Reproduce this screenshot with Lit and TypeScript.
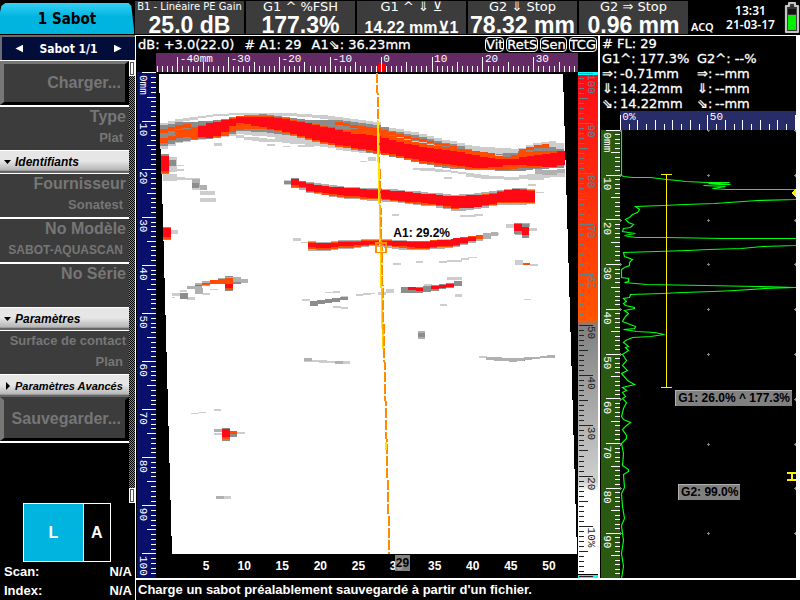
import { LitElement, html, css, svg, nothing } from "lit";
import { customElement, property } from "lit/decorators.js";

type Pt = [number, number, number];
type Box = [number, number, number, number];

const RED = "#ff0a14";
const ORANGE = "#ff4c00";
const DARK = "#8c8c8c";
const MID = "#b0b0b0";
const LIGHT = "#cdcdcd";

/* Echo bands: [x, top, bottom] knots, sampled once per beam. */
const MAIN_ECHO: { fill: string; pts: Pt[] }[] = [
  { fill: LIGHT, pts: [[160, 123, 127], [180, 118, 121], [197, 115, 118], [217, 113, 115], [240, 112, 114], [263, 112, 114], [290, 112, 115], [310, 113, 116], [330, 115, 119], [350, 118, 122], [377, 121, 126]] },
  { fill: LIGHT, pts: [[160, 140, 149], [180, 136, 142], [197, 133, 139], [222, 132, 137], [240, 128, 133], [248, 127, 134], [263, 127, 135], [290, 130, 140], [310, 136, 144], [330, 140, 147], [350, 144, 151], [377, 148, 153]] },
  { fill: LIGHT, pts: [[236, 133, 136], [250, 136, 140], [275, 138, 141], [298, 140, 143], [312, 143, 145]] },
  { fill: DARK, pts: [[160, 125, 146], [180, 121, 141], [197, 121, 139], [222, 118, 136], [240, 115, 130], [263, 113, 131], [290, 117, 134], [310, 119, 139], [330, 119, 144], [350, 120, 148], [377, 124, 153], [400, 130, 157], [420, 134, 162], [437, 138, 166], [457, 142, 168], [480, 147, 169], [507, 150, 170], [520, 149, 170], [537, 145, 168], [565, 147, 167]] },
  { fill: LIGHT, pts: [[385, 125, 128], [400, 128, 131], [420, 132, 135], [437, 137, 140], [457, 141, 144], [475, 145, 150], [500, 147, 153], [520, 148, 151], [535, 142, 146], [557, 140, 146], [565, 145, 150]] },
  { fill: LIGHT, pts: [[400, 136, 138], [430, 143, 145], [457, 148, 150], [475, 151, 153], [500, 154, 156]] },
  { fill: ORANGE, pts: [[160, 129, 133], [175, 125, 129], [190, 123, 127]] },
  { fill: ORANGE, pts: [[160, 138, 143], [178, 133, 137], [198, 128, 134], [205, 126, 133]] },
  { fill: ORANGE, pts: [[175, 130, 133], [198, 126, 136], [222, 124, 132], [245, 123, 128], [267, 122, 127]] },
  { fill: ORANGE, pts: [[337, 121, 124], [350, 123, 126], [377, 127, 131], [400, 133, 136], [430, 140, 142], [457, 146, 148]] },
  { fill: ORANGE, pts: [[350, 127, 130], [377, 130, 135], [400, 137, 140], [430, 144, 147], [470, 149, 155], [495, 153, 157]] },
  { fill: ORANGE, pts: [[192, 126, 138], [222, 120, 136], [240, 115, 128], [267, 115, 128], [290, 118, 133], [330, 126, 144], [377, 134, 152], [430, 146, 163], [457, 149, 167], [480, 154, 168], [507, 156, 169], [520, 152, 167], [537, 150, 167], [565, 150, 165]] },
  { fill: ORANGE, pts: [[520, 149, 153], [537, 144, 147], [547, 143, 147]] },
  { fill: RED, pts: [[198, 127, 136], [207, 122, 137], [222, 120, 134], [230, 118, 126], [240, 116, 122], [267, 116, 127], [290, 119, 132], [310, 122, 137], [330, 127, 142], [350, 132, 146], [377, 135, 150], [400, 141, 155], [430, 147, 161], [457, 150, 165], [480, 155, 167], [498, 158, 166]] },
  { fill: RED, pts: [[495, 158, 164], [512, 158, 164], [537, 154, 165], [552, 152, 166], [565, 149, 163]] },
  { fill: LIGHT, pts: [[412, 167, 169], [430, 167, 170], [457, 170, 172], [475, 173, 176]] },
  { fill: LIGHT, pts: [[467, 171, 176], [490, 175, 178], [512, 176, 179], [540, 172, 177], [565, 169, 176]] },
  { fill: MID, pts: [[535, 168, 173], [550, 169, 175], [565, 167, 171]] },
];

const LATER_ECHOES: { fill: string; pts: Pt[] }[] = [
  { fill: MID, pts: [[299, 179, 186], [307, 181, 192], [322, 183, 194], [350, 186, 198], [377, 187, 200], [400, 189, 202], [437, 192, 206], [457, 194, 210], [475, 192, 209], [503, 189, 203], [513, 187, 204], [535, 188, 203]] },
  { fill: ORANGE, pts: [[299, 180, 184], [307, 181, 190], [322, 185, 193], [350, 187, 197], [377, 188, 198], [437, 194, 205], [457, 195, 208], [487, 193, 205], [503, 190, 202], [513, 188, 202], [535, 189, 202]] },
  { fill: RED, pts: [[299, 181, 183], [307, 182, 189], [322, 185, 192], [350, 187, 195], [377, 189, 197], [400, 190, 200], [437, 194, 203], [457, 195, 207], [475, 194, 207], [487, 194, 204], [503, 190, 201], [513, 188, 201], [535, 190, 201]] },
  { fill: MID, pts: [[309, 240, 250], [325, 241, 250], [345, 239, 248], [377, 238, 245], [400, 239, 249], [422, 240, 249], [450, 238, 247], [473, 235, 242], [495, 231, 235]] },
  { fill: ORANGE, pts: [[309, 241, 248], [325, 242, 249], [345, 240, 247], [377, 239, 244], [400, 240, 247], [422, 240, 248], [457, 237, 245], [480, 234, 238]] },
  { fill: RED, pts: [[309, 242, 246], [325, 242, 247], [345, 241, 245], [377, 240, 243], [400, 240, 245], [422, 241, 247], [457, 237, 244], [474, 236, 239]] },
  { fill: MID, pts: [[187, 286, 289], [203, 281, 286], [218, 278, 282], [232, 275, 280], [247, 279, 282]] },
  { fill: ORANGE, pts: [[194, 285, 286], [205, 282, 284], [218, 278, 282], [232, 277, 283]] },
  { fill: DARK, pts: [[310, 300, 305], [330, 298, 302], [345, 296, 299]] },
  { fill: DARK, pts: [[401, 286, 292], [422, 286, 292], [445, 283, 288], [461, 279, 284]] },
  { fill: RED, pts: [[409, 286, 289], [424, 287, 290]] },
  { fill: RED, pts: [[432, 286, 289], [454, 282, 285]] },
  { fill: MID, pts: [[487, 357, 360], [512, 358, 362], [535, 357, 359], [550, 355, 358]] },
];

/* Isolated reflections: x, y, width, height. */
const SPOTS: { fill: string; boxes: Box[] }[] = [
  { fill: LIGHT, boxes: [
    [284, 179, 8, 5], [163, 173, 14, 7], [169, 156, 8, 15], [177, 164, 7, 1], [177, 168, 7, 2], [177, 176, 8, 3], [184, 177, 8, 2],
    [192, 177, 8, 12], [200, 190, 15, 4], [200, 197, 16, 4], [214, 142, 8, 3], [267, 143, 8, 2], [283, 145, 7, 1], [298, 144, 16, 2], [360, 160, 7, 1], [368, 156, 8, 4],
    [171, 229, 7, 4], [293, 237, 8, 3], [301, 241, 7, 1], [392, 213, 7, 2], [460, 214, 16, 2], [474, 213, 9, 2], [528, 183, 8, 2], [536, 191, 8, 1],
    [506, 223, 8, 4], [529, 227, 8, 3], [490, 232, 9, 2], [515, 259, 8, 5], [530, 263, 8, 2], [393, 262, 8, 2], [416, 260, 7, 2], [439, 260, 8, 2], [447, 259, 15, 2], [461, 257, 8, 2], [468, 256, 9, 1],
    [172, 292, 8, 3], [180, 289, 7, 2], [172, 296, 3, 1], [187, 296, 8, 3], [203, 292, 7, 2], [210, 288, 8, 1], [241, 280, 7, 2], [302, 298, 8, 2], [325, 291, 8, 1], [333, 290, 7, 2], [333, 305, 8, 2], [341, 306, 7, 2],
    [341, 295, 7, 4], [356, 293, 7, 2], [363, 292, 8, 2], [370, 292, 5, 1], [378, 291, 8, 3], [386, 288, 8, 4], [424, 283, 8, 5], [447, 276, 15, 3], [455, 293, 7, 3], [440, 303, 7, 2], [524, 298, 7, 1],
    [304, 358, 8, 4], [312, 360, 7, 2], [319, 360, 8, 3], [327, 361, 8, 2], [343, 361, 7, 3], [479, 356, 8, 2], [547, 355, 8, 2],
    [191, 413, 8, 1], [199, 412, 7, 1], [214, 409, 7, 2], [214, 433, 8, 2], [237, 432, 8, 2], [224, 496, 7, 3], [528, 176, 16, 3], [444, 176, 8, 2],
  ] },
  { fill: MID, boxes: [[192, 178, 8, 8], [200, 184, 7, 5], [195, 287, 8, 6], [214, 429, 8, 3], [216, 496, 8, 3], [304, 358, 8, 3], [335, 361, 8, 3], [418, 331, 7, 8], [515, 232, 8, 2], [522, 222, 8, 4]] },
  { fill: DARK, boxes: [[284, 180, 8, 3], [161, 153, 8, 20], [163, 226, 8, 13], [169, 159, 7, 6], [192, 182, 7, 5], [180, 292, 8, 6], [310, 301, 8, 4], [418, 333, 7, 4], [503, 358, 22, 3], [222, 428, 8, 13], [230, 434, 7, 3], [225, 275, 8, 15], [233, 279, 8, 4], [522, 223, 7, 14], [514, 222, 8, 11], [291, 177, 8, 10]] },
  { fill: ORANGE, boxes: [[161, 155, 8, 17], [163, 227, 8, 11], [222, 429, 8, 10], [230, 431, 7, 3], [225, 276, 8, 13], [233, 279, 7, 2], [523, 262, 7, 2], [218, 277, 8, 6], [291, 178, 8, 8]] },
  { fill: RED, boxes: [[161, 155, 8, 15], [163, 227, 8, 9], [222, 429, 8, 8], [225, 276, 8, 11], [514, 223, 8, 7], [522, 226, 7, 8], [291, 178, 8, 6], [219, 278, 7, 4]] },
];

const BEAM = 7.62;

function sample(pts: Pt[], x: number): [number, number] {
  for (let i = 1; i < pts.length; i++) {
    if (x <= pts[i][0]) {
      const [a, b] = [pts[i - 1], pts[i]];
      const t = Math.max(0, (x - a[0]) / (b[0] - a[0]));
      return [a[1] + (b[1] - a[1]) * t, a[2] + (b[2] - a[2]) * t];
    }
  }
  const last = pts[pts.length - 1];
  return [last[1], last[2]];
}

function bandPath(pts: Pt[]): string {
  const start = pts[0][0];
  const end = pts[pts.length - 1][0];
  const offset = 160 + (pts[0][1] - 125) / 37;
  let d = "";
  for (let k = Math.round((start - offset) / BEAM); ; k++) {
    const x0 = Math.round(offset + k * BEAM);
    if (x0 >= end - 2) break;
    const x1 = Math.round(offset + (k + 1) * BEAM);
    const [top, bottom] = sample(pts, (x0 + x1) / 2);
    const y0 = Math.round(top);
    d += `M${x0} ${y0}H${x1}V${Math.max(y0 + 1, Math.round(bottom))}H${x0}Z`;
  }
  return d;
}

/* A-scan amplitude trace: x grows with amplitude, y with depth. */
const TRACE =
  "1,0 1,45 3,46 12,47 30,47 46,49 57,50 65,51 87,52 109,52 88,53 110,54 83,55 105,56 92,58 106,59 176,59 " +
  "176,69 137,70 94,73 64,74 43,75 15,76 19,79 17,82 12,84 9,87 5,89 8,92 13,94 10,97 3,98 2,101 15,103 4,105 8,106 16,107 46,107 103,108 176,108 " +
  "176,115 142,116 121,118 88,119 67,120 36,121 3,122 4,126 12,129 9,132 9,135 4,137 1,139 1,147 8,148 8,151 4,152 26,154 84,155 137,156 176,157 " +
  "145,158 114,160 93,161 62,162 42,163 10,164 9,167 3,168 6,171 3,173 5,175 14,177 14,178 4,180 8,183 5,186 3,189 2,191 15,196 14,198 3,199 16,201 34,202 44,204 30,206 12,207 5,210 3,212 8,216 " +
  "5,217 8,220 2,224 6,230 2,235 7,240 1,243 7,250 14,254 2,257 6,260 2,262 5,266 2,268 6,272 3,278 1,286 3,289 10,292 6,295 2,299 6,305 6,308 1,313 3,323 2,335 8,339 8,341 3,344 4,357 1,363 2,376 4,388 1,395 3,410 1,423 3,436 1,448";

@customElement("axis-ruler")
export class AxisRuler extends LitElement {
  @property({ type: Number }) min = 0;
  @property({ type: Number }) max = 100;
  @property({ type: Number }) step = 1;
  @property({ type: Number }) mid = 5;
  @property({ type: Number }) major = 10;
  @property() unit = "";
  @property({ type: Number }) unitAt = 0;
  @property() layout: "top" | "side" | "scale" = "top";

  static styles = css`
    :host { display: block; overflow: hidden; }
    svg { display: block; width: 100%; height: 100%; }
    line { stroke: #fff; shape-rendering: crispEdges; }
    text { font: 11px "Liberation Mono", monospace; fill: #fff; }
    .cool line { stroke: #5b8292; }
    .cool text { fill: #5b8292; }
    .warm line { stroke: #222; }
    .warm text { fill: #222; }
  `;

  private mark(v: number) {
    const pos = `${((v - this.min) / (this.max - this.min)) * 100}%`;
    const isMajor = v % this.major === 0;
    const isMid = v % this.mid === 0;
    const label = isMajor && v < this.max - 1 ? `${v}${v === this.unitAt ? this.unit : ""}` : "";
    if (this.layout === "top") {
      const top = isMajor ? 4 : isMid ? 9 : 13;
      return svg`<svg x=${pos} y="0" overflow="visible">
        <line x1="0" x2="0" y1=${top} y2="19"></line>
        ${label ? svg`<text x="2" y="9">${label}</text>` : nothing}</svg>`;
    }
    if (this.layout === "side") {
      const left = isMajor ? 5 : isMid ? 10 : 14;
      return svg`<svg x="0" y=${pos} overflow="visible">
        <line x1=${left} x2="20" y1="0" y2="0"></line>
        ${label ? svg`<text transform="rotate(90)" x="2" y="-3">${label}</text>` : nothing}</svg>`;
    }
    const value = -v;
    const right = isMajor ? 15 : isMid ? 10 : 6;
    const caption = isMajor && value > 0 ? `${value}${value === this.unitAt ? this.unit : ""}` : "";
    return svg`<svg x="0" y=${pos} overflow="visible" class=${value > 50 ? "cool" : "warm"}>
      <line x1="1" x2=${right} y1="0" y2="0"></line>
      ${caption ? svg`<text transform="rotate(90)" x="1" y="-10">${caption}</text>` : nothing}</svg>`;
  }

  render() {
    const marks = [];
    for (let v = Math.ceil(this.min / this.step) * this.step; v <= this.max; v += this.step) marks.push(this.mark(v));
    return html`<svg aria-hidden="true">${marks}</svg>`;
  }
}

@customElement("side-panel")
export class SidePanel extends LitElement {
  static styles = css`
    :host { display: flex; flex-direction: column; background: #000; color: #fff; font: bold 13px/16px "Liberation Sans", Arial, sans-serif; min-height: 0; }
    button { font: inherit; color: inherit; background: none; border: 0; border-radius: 0; padding: 0; margin: 0; }
    .pager { display: flex; align-items: center; justify-content: center; gap: 16px; height: 25px; box-sizing: border-box; background: #020d3a; border-top: 2px solid #6a6a72; border-left: 2px solid #6a6a72; font: bold 12px/16px "DejaVu Sans Condensed", "DejaVu Sans", sans-serif; }
    .arrow { width: 8px; height: 8px; background: #fff; }
    .prev { clip-path: polygon(0 50%, 100% 0, 100% 100%); }
    .next { clip-path: polygon(0 0, 100% 50%, 0 100%); }
    .body { display: grid; grid-template-columns: 1fr 6px; border-top: 1px solid #fff; }
    .track { background: repeating-conic-gradient(#888 0 25%, #000 0 50%) 0 0 / 2px 2px; display: flex; flex-direction: column; justify-content: space-between; height: 442px; }
    .cap { height: 15px; box-sizing: border-box; border: 1px solid #fff; background: #fff; box-shadow: inset 0 0 0 1px #555; }
    .list { display: flex; flex-direction: column; }
    .action { height: 44px; box-sizing: border-box; border: solid; border-width: 3px 4px 3px 4px; border-color: #777 #000 #000 #777; background: #3c3c3c; color: #767676; font-size: 16px; text-align: right; padding-right: 4px; }
    .save { border-top-color: #3c3c3c; }
    .field { display: flex; flex-direction: column; align-items: flex-end; height: 45px; box-sizing: border-box; background: #3c3c3c; color: #767676; border-top: 2px solid #fff; padding: 1px 3px 0 0; white-space: nowrap; }
    .field .name { font-size: 16px; line-height: 18px; }
    .field .val { font-size: 13px; line-height: 24px; padding-right: 3px; }
    .field .code { font-size: 12px; }
    .field.small .name { font-size: 13px; }
    .field.first { border-top-width: 1px; height: 44px; }
    .head { display: flex; align-items: center; gap: 4px; height: 23px; box-sizing: border-box; padding-left: 4px; text-align: left; color: #000; background: linear-gradient(#e6e6e6 0 45%, #b4b4b4 88%, #666 90%); border-top: 1px solid #fff; font-style: italic; font-size: 12px; white-space: nowrap; }
    .head svg { width: 7px; height: 8px; flex: none; }
    .head.long { font-size: 11px; }
    .end { border-top: 2px solid #fff; }
    .probe { display: flex; margin: 0 24px 0 23px; height: 59px; box-sizing: border-box; border: 1px solid #fff; font: bold 16px/20px "Liberation Sans", Arial, sans-serif; }
    .probe button:first-child { flex: 60; background: #00b4e0; border-right: 1px solid #fff; }
    .probe button:last-child { flex: 27; }
    .pos { display: flex; justify-content: space-between; margin: 0; padding: 0 3px 0 4px; line-height: 19px; }
    .pos dt, .pos dd { margin: 0; }
  `;

  private field(name: string, val: string, cls = "", valCls = "") {
    return html`<button class="field ${cls}"><span class="name">${name}</span><span class="val ${valCls}">${val}</span></button>`;
  }

  private head(text: string, open: boolean, cls = "") {
    return html`<button class="head ${cls}" aria-expanded=${open ? "true" : "false"}>
      <svg viewBox="0 0 7 8" aria-hidden="true"><path d=${open ? "M0 2H7L3.500 6Z" : "M2 0L6 4L2 8Z"} fill="#000"></path></svg><span>${text}</span></button>`;
  }

  render() {
    return html`
      <nav class="pager">
        <button class="arrow prev" aria-label="Précédent"></button><span>Sabot 1/1</span><button class="arrow next" aria-label="Suivant"></button>
      </nav>
      <div class="body">
        <div class="list">
          <button class="action">Charger...</button>
          ${this.field("Type", "Plat")}
          ${this.head("Identifiants", true)}
          ${this.field("Fournisseur", "Sonatest", "first")}
          ${this.field("No Modèle", "SABOT-AQUASCAN", "", "code")}
          ${this.field("No Série", "")}
          ${this.head("Paramètres", true)}
          ${this.field("Surface de contact", "Plan", "small first")}
          ${this.head("Paramètres Avancés", false, "long")}
          <button class="action save">Sauvegarder...</button>
          <div class="end"></div>
        </div>
        <div class="track"><div class="cap"></div><div class="cap"></div></div>
      </div>
      <div class="probe"><button>L</button><button>A</button></div>
      <dl class="pos"><dt>Scan:</dt><dd>N/A</dd></dl>
      <dl class="pos"><dt>Index:</dt><dd>N/A</dd></dl>
    `;
  }
}

@customElement("b-scan")
export class BScan extends LitElement {
  static styles = css`
    :host { display: grid; grid-template-columns: 20px 1fr 20px; grid-template-rows: 17px 19px 1fr 24px; background: #000; color: #fff; min-width: 0; min-height: 0; }
    .info { grid-column: 1 / -1; display: flex; align-items: center; justify-content: space-between; font: 13px/16px "DejaVu Sans", sans-serif; -webkit-text-stroke: 0.3px #fff; padding: 0 1px 0 2px; white-space: nowrap; }
    .reads { display: flex; gap: 10px; }
    .tags { display: flex; gap: 2px; }
    .tag { box-sizing: border-box; height: 15px; line-height: 13px; border: 1px solid #fff; border-radius: 4px; }
    .across { grid-column: 2; grid-row: 2; background: #642a64; }
    .origin { grid-column: 2; grid-row: 2; align-self: end; width: 9px; height: 9px; border-radius: 50%; margin-left: calc(53.400% - 4px); background: linear-gradient(90deg, transparent 4px, #fff 4px 5px, transparent 5px), #ff0000; }
    .depth { grid-column: 1; grid-row: 3 / 5; background: #08106c; margin-left: 1px; }
    .palette { grid-column: 3; grid-row: 3 / 5; background: linear-gradient(#00ffff 0 3px, #ff0a18 3px, #ff5500 49%, #808080 50%, #cfcfcf 81%, #fff 83%, #fff calc(100% - 4px), #000 calc(100% - 4px) calc(100% - 3px), #00ffff calc(100% - 3px)); }
    .plot { grid-column: 2; grid-row: 3; position: relative; min-height: 0; }
    .plot svg { position: absolute; inset: 0; width: 100%; height: 100%; display: block; }
    .note { position: absolute; left: 56%; top: 32%; font: bold 12px/14px "Liberation Sans", Arial, sans-serif; color: #000; background: rgba(255, 255, 255, 0.6); padding: 0 1px; white-space: nowrap; }
    .beams { grid-column: 2; grid-row: 4; position: relative; display: grid; grid-template-columns: repeat(10, 1fr); align-items: center; text-align: center; padding: 0 10px 0 31px; font: bold 12px/16px "Liberation Sans", Arial, sans-serif; }
    .current { position: absolute; left: 56.600%; top: 1px; background: rgba(150, 150, 150, 0.85); color: #000; padding: 0 1px; }
  `;

  private bands(list: { fill: string; pts: Pt[] }[]) {
    return list.map((b) => svg`<path d=${bandPath(b.pts)} fill=${b.fill}></path>`);
  }

  render() {
    return html`
      <div class="info">
        <span class="reads"><span>dB: +3.0(22.0)</span><span># A1: 29</span><span>A1⇘: 36.23mm</span></span>
        <span class="tags"><span class="tag">Vit</span><span class="tag">RetS</span><span class="tag">Sen</span><span class="tag">TCG</span></span>
      </div>
      <axis-ruler class="across" layout="top" min="-44.3" max="38.7" unit="mm" unitAt="-40"></axis-ruler>
      <div class="origin"></div>
      <axis-ruler class="depth" layout="side" min="-0.2" max="105" unit="mm"></axis-ruler>
      <div class="plot">
        <svg viewBox="156 71 422 483" preserveAspectRatio="none" shape-rendering="crispEdges" role="img" aria-label="B-scan">
          <path d="M159 73H563L577 554H172Z" fill="#fff"></path>
          ${this.bands(MAIN_ECHO)}
          ${SPOTS.map((s) => svg`<path d=${s.boxes.map(([x, y, w, h]) => `M${x} ${y}h${w}v${h}h${-w}Z`).join("")} fill=${s.fill}></path>`)}
          ${this.bands(LATER_ECHOES)}
          <path d="M377 72L389.500 554" stroke="#ff8c00" stroke-width="2" stroke-dasharray="10 2" fill="none"></path>
          <path d="M377.500 119L383 349M386 442L386.500 450" stroke="#ffe400" stroke-width="2" fill="none"></path>
          <path d="M379.500 180L383.500 349" stroke="#ff8c00" stroke-width="1" stroke-dasharray="10 2" fill="none"></path>
          <path d="M376 242.500H386V252H376Z" stroke="#ff8c00" stroke-width="1.500" fill="none"></path>
        </svg>
        <span class="note">A1: 29.2%</span>
      </div>
      <div class="beams">${[5, 10, 15, 20, 25, 30, 35, 40, 45, 50].map((n) => html`<span>${n}</span>`)}<span class="current">29</span></div>
      <axis-ruler class="palette" layout="scale" min="-100.2" max="0.2" unit="%" unitAt="10"></axis-ruler>
    `;
  }
}

@customElement("a-scan")
export class AScan extends LitElement {
  static styles = css`
    :host { display: grid; grid-template-columns: 19px 1fr; grid-template-rows: 75px 19px 1fr; background: #000; color: #fff; min-width: 0; min-height: 0; padding-left: 1px; }
    .reads { grid-column: 1 / -1; display: grid; grid-template-columns: 95px 1fr; font: 13px/15px "DejaVu Sans", sans-serif; -webkit-text-stroke: 0.3px #fff; padding-left: 1px; align-content: start; white-space: nowrap; }
    .wide { grid-column: 1 / -1; }
    .pair { display: grid; grid-template-columns: 18px 1fr; }
    .amp { grid-column: 2; background: #282c68; }
    .depth { grid-column: 1; background: #2a5a12; }
    .plot { position: relative; min-height: 0; }
    .plot svg { position: absolute; inset: 0; width: 100%; height: 100%; display: block; }
    .gate { position: absolute; background: #808080; color: #000; border: solid #b0b0b0; border-width: 1px 0 0 1px; font: bold 12px/15px "Liberation Sans", Arial, sans-serif; padding: 0 2px; white-space: nowrap; }
    .g1 { right: 4px; top: 58%; }
    .g2 { left: 33%; top: 79%; }
  `;

  render() {
    const pair = (a: string, b: string) => html`<span class="pair"><span>${a}:</span><span>${b}</span></span>`;
    const crosses = [];
    for (let y = 0; y <= 448; y += 44.8) for (const x of [0.5, 88.5, 175.5]) crosses.push(`M${x - 1.5} ${Math.round(y) + 0.5}h3m-1.5 -1.5v3`);
    return html`
      <div class="reads">
        <span class="wide"># FL: 29</span>
        <span>G1^: 177.3%</span><span>G2^: --%</span>
        ${pair("⇒", "-0.71mm")}${pair("⇒", "--mm")}
        ${pair("⇓", "14.22mm")}${pair("⇓", "--mm")}
        ${pair("⇘", "14.22mm")}${pair("⇘", "--mm")}
      </div>
      <axis-ruler class="amp" layout="top" min="-0.2" max="100.4" step="5" mid="10" major="50" unit="%"></axis-ruler>
      <axis-ruler class="depth" layout="side" min="-0.1" max="100" unit="mm"></axis-ruler>
      <div class="plot">
        <svg viewBox="0 0 176 448" preserveAspectRatio="none" role="img" aria-label="A-scan">
          <path d=${crosses.join("")} stroke="#8a8080" fill="none" shape-rendering="crispEdges"></path>
          <polyline points=${TRACE} transform="translate(0.5 0.5)" stroke="#00ff10" stroke-width="1.2" fill="none"></polyline>
          <g shape-rendering="crispEdges" stroke="#fff000" fill="none">
            <path d="M41 44.500H52M46.500 44V257M41 257.500H52"></path>
            <path d="M176 59V67L172 63Z" fill="#fff000"></path>
            <path d="M167 343H176M167 350H176M171.500 343V350" stroke-width="2"></path>
          </g>
        </svg>
        <span class="gate g1">G1: 26.0% ^ 177.3%</span>
        <span class="gate g2">G2: 99.0%</span>
      </div>
    `;
  }
}

@customElement("app-root")
export class AppRoot extends LitElement {
  static styles = css`
    :host { display: grid; grid-template-columns: 135px 1fr 200px; grid-template-rows: 35px 1fr 20px; height: 100vh; background: #000; color: #fff; overflow: hidden; font: bold 13px/16px "Liberation Sans", Arial, sans-serif; }
    .tab { margin: 3px 1px 1px 0; padding: 0; border: 0; background: linear-gradient(#38d0f4, #00b4e0 45%); clip-path: polygon(0 30%, 1% 10%, 4% 0, 96% 0, 98% 10%, 100% 85%, 100% 100%, 0 100%); font: bold 15px/20px "DejaVu Sans Condensed", "DejaVu Sans", sans-serif; color: #000; }
    .top { grid-column: 2 / 4; display: grid; grid-template-columns: 1fr 111px; grid-template-rows: 100%; min-height: 0; }
    .tiles { display: grid; grid-template-columns: repeat(5, 1fr); grid-template-rows: 100%; box-sizing: border-box; gap: 2px; padding: 1px 1px 1px 0; min-height: 0; }
    .tile { background: #3c3c3c; display: flex; flex-direction: column; align-items: center; white-space: nowrap; min-width: 0; min-height: 0; }
    .tile .cap { font: 13px/12px "DejaVu Sans", sans-serif; }
    .tile .cap.long { font-size: 10px; }
    .tile .num { font-size: 23px; line-height: 25px; }
    .tile .num.sm { font-size: 16px; line-height: 29px; }
    .status { display: grid; grid-template-columns: 26px 1fr 16px; grid-template-rows: 100%; gap: 2px; align-items: center; padding-left: 2px; min-height: 0; }
    .acq { font: 600 11px/16px "Noto Sans", sans-serif; align-self: end; }
    .clock { font: 600 12px/14px "Noto Sans", sans-serif; text-align: center; }
    .battery { width: 16px; height: 33px; display: block; }
    side-panel { grid-row: 2 / 4; }
    .work { grid-column: 2 / 4; display: grid; grid-template-columns: 1fr 200px; border-top: 1px solid #fff; border-left: 1px solid #fff; border-bottom: 2px solid #fff; min-height: 0; }
    .work a-scan { border-right: 4px solid #fff; }
    .work b-scan { border-right: 2px solid #fff; }
    .hint { grid-column: 2 / 4; margin: 0; padding: 2px 0 0 2px; border-left: 1px solid #fff; white-space: nowrap; }
  `;

  private tile(cap: string, num: string, capCls = "", numCls = "") {
    return html`<div class="tile"><span class="cap ${capCls}">${cap}</span><span class="num ${numCls}">${num}</span></div>`;
  }

  render() {
    return html`
      <button class="tab">1 Sabot</button>
      <header class="top">
        <div class="tiles">
          ${this.tile("B1 - Linéaire PE Gain", "25.0 dB", "long")}
          ${this.tile("G1 ^ %FSH", "177.3%")}
          ${this.tile("G1 ^ ⇓ ⊻", "14.22 mm⊻1", "", "sm")}
          ${this.tile("G2 ⇓ Stop", "78.32 mm")}
          ${this.tile("G2 ⇒ Stop", "0.96 mm")}
        </div>
        <div class="status">
          <span class="acq">ACQ</span>
          <span class="clock">13:31<br />21-03-17</span>
          <svg class="battery" viewBox="0 0 16 33" aria-label="Batterie">
            <path d="M5 2H11V5H14V31H2V5H5Z" fill="#333" stroke="#c4c4c4" stroke-width="2.200" stroke-linejoin="round"></path>
            <path d="M4 8H12V13H4Z" fill="#101010"></path>
            <path d="M4 14H12V29H4Z" fill="#00f000"></path>
          </svg>
        </div>
      </header>
      <side-panel></side-panel>
      <main class="work"><b-scan></b-scan><a-scan></a-scan></main>
      <p class="hint">Charge un sabot préalablement sauvegardé à partir d'un fichier.</p>
    `;
  }
}
